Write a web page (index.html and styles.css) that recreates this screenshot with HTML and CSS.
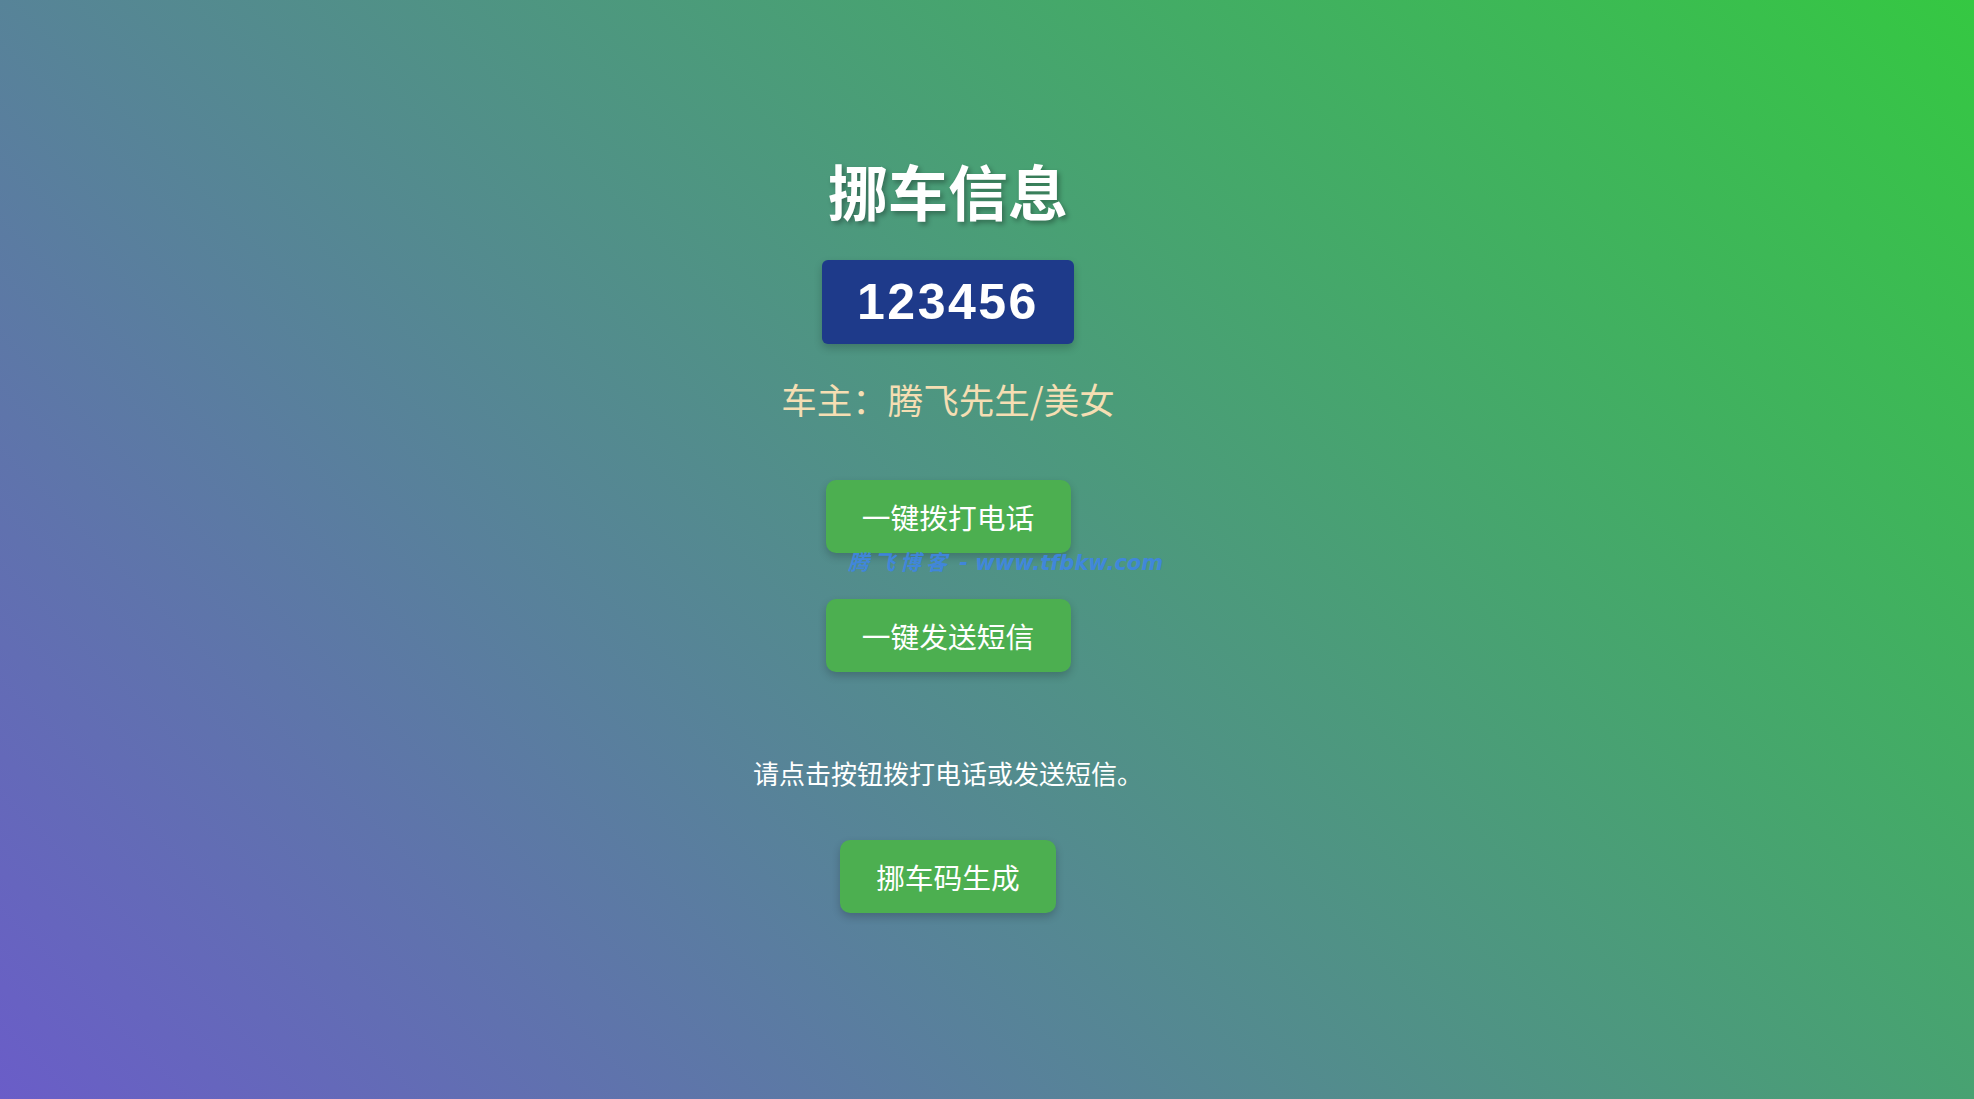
FILE: index.html
```html
<!DOCTYPE html>
<html lang="zh-CN">
<head>
<meta charset="utf-8">
<title>挪车信息</title>
<link rel="stylesheet" href="styles.css">
</head>
<body class="page">
  <main class="card">
    <h1 class="title">挪车信息</h1>
    <div class="plate">123456</div>
    <p class="owner">车主：腾飞先生/美女</p>
    <a class="btn btn-call" href="#">一键拨打电话</a>
    <a class="btn btn-sms" href="#">一键发送短信</a>
    <p class="hint">请点击按钮拨打电话或发送短信。</p>
    <a class="btn btn-gen" href="#">挪车码生成</a>
  </main>
  <div class="watermark"><span class="wm-cn">腾飞博客</span> - www.tfbkw.com</div>
</body>
</html>
```
FILE: styles.css
```css
html, body {
  margin: 0;
  padding: 0;
}
.page {
  min-height: 100vh;
  background: linear-gradient(45deg, #6a5dc8, #35c842);
  font-family: "Noto Sans CJK SC", "Noto Sans", sans-serif;
  color: #fff;
}
.card {
  display: flex;
  flex-direction: column;
  align-items: center;
  padding: 154px 78px 0 0;
  box-sizing: border-box;
}
.title {
  margin: 0;
  font-size: 60px;
  line-height: 72px;
  font-weight: 700;
  color: #fff;
  text-shadow: 2.5px 2.5px 5px rgba(0, 0, 0, 0.3);
}
.plate {
  margin-top: 34px;
  padding: 12px 35px;
  line-height: 60px;
  font-family: "Liberation Sans", Arial, sans-serif;
  font-size: 50px;
  font-weight: 700;
  letter-spacing: 2.5px;
  background: #1e3a8a;
  color: #fff;
  border-radius: 6px;
  box-shadow: 0 4px 8px rgba(0, 0, 0, 0.2);
}
.owner {
  margin: 31px 0 0;
  font-size: 35.5px;
  line-height: 48px;
  color: #f5deb3;
}
.btn {
  display: block;
  text-decoration: none;
  background: #4caf50;
  color: #fff;
  font-size: 28.75px;
  line-height: 41px;
  padding: 16px 36.25px;
  border-radius: 10px;
  box-shadow: 0 4px 8px rgba(0, 0, 0, 0.2);
}
.btn-call {
  margin-top: 57px;
}
.btn-sms {
  margin-top: 46px;
}
.hint {
  margin: 83px 0 0;
  font-size: 26px;
  line-height: 36px;
  color: #fff;
}
.btn-gen {
  margin-top: 49px;
}
.watermark {
  position: absolute;
  left: 848px;
  top: 546px;
  line-height: 30px;
  font-family: "DejaVu Sans", sans-serif;
  font-size: 21px;
  font-weight: 700;
  font-style: oblique;
  color: #3f86e4;
  opacity: 0.9;
  white-space: pre;
}
.wm-cn {
  font-family: "Noto Sans CJK SC", sans-serif;
  letter-spacing: 5px;
}
```
